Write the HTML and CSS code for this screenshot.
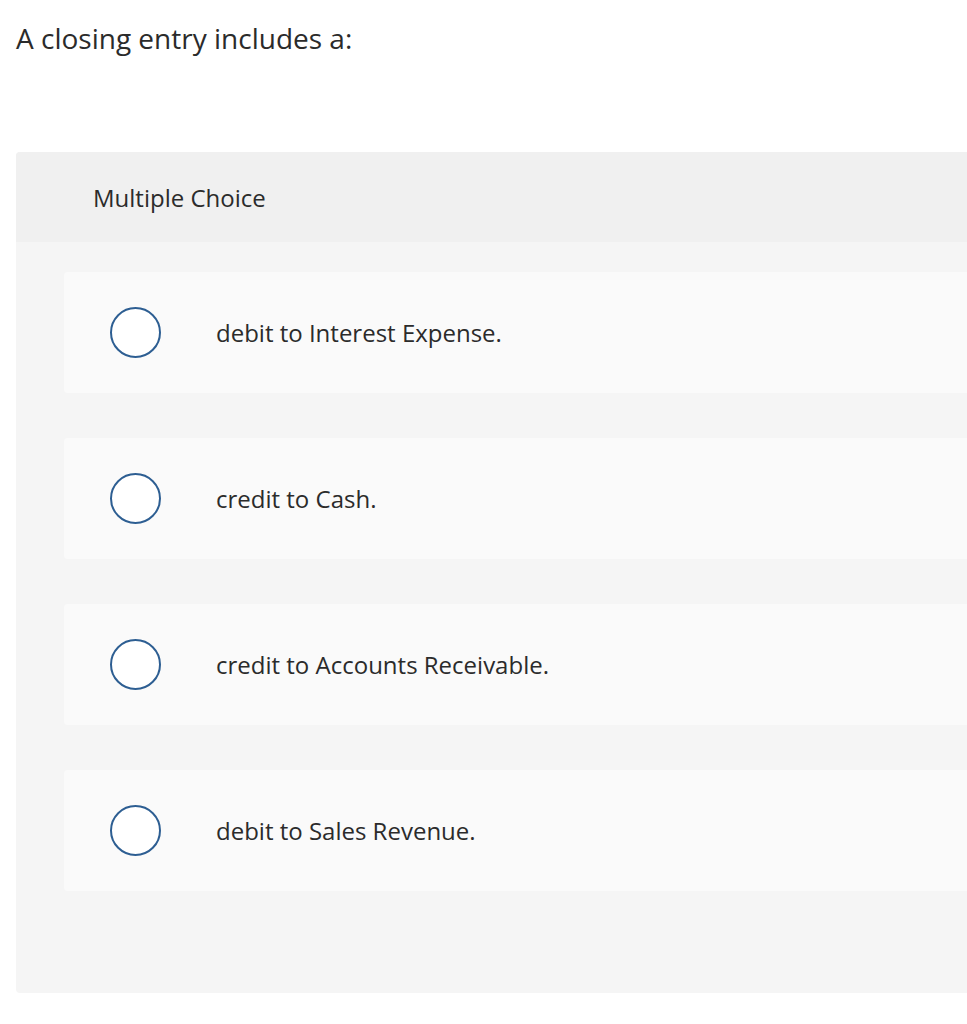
FILE: index.html
```html
<!DOCTYPE html>
<html>
<head>
<meta charset="utf-8">
<link rel="stylesheet" href="styles.css">
</head>
<body>
<div class="page">
  <h1 class="question">A closing entry includes a:</h1>
  <section class="panel">
    <header class="panel-head">Multiple Choice</header>
    <div class="options">
      <label class="option"><span class="radio"></span><span class="opt-text">debit to Interest Expense.</span></label>
      <label class="option"><span class="radio"></span><span class="opt-text">credit to Cash.</span></label>
      <label class="option"><span class="radio"></span><span class="opt-text">credit to Accounts Receivable.</span></label>
      <label class="option"><span class="radio"></span><span class="opt-text">debit to Sales Revenue.</span></label>
    </div>
  </section>
</div>
</body>
</html>
```
FILE: styles.css
```css
html, body {
  margin: 0;
  padding: 0;
  background: #ffffff;
}
body {
  font-family: "Open Sans", "Liberation Sans", sans-serif;
  color: #333333;
}
.page {
  padding: 18px 0 0 16px;
}
.question {
  margin: 0;
  font-size: 28px;
  font-weight: 400;
  line-height: 40px;
  color: #2b2b2b;
  height: 134px;
}
.panel {
  background: #f5f5f5;
  border-radius: 4px 0 0 4px;
  height: 841px;
}
.panel-head {
  background: #f0f0f0;
  border-radius: 4px 0 0 0;
  height: 90px;
  padding-left: 77px;
  display: flex;
  align-items: center;
  font-size: 24px;
  color: #2b2b2b;
}
.options {
  padding: 30px 0 0 48px;
  display: flex;
  flex-direction: column;
  gap: 45px;
}
.option {
  background: #fafafa;
  border-radius: 4px 0 0 4px;
  height: 121px;
  display: flex;
  align-items: center;
  padding-left: 46px;
}
.radio {
  width: 47px;
  height: 47px;
  border: 2px solid #2d5e92;
  border-radius: 50%;
  background: #ffffff;
  flex: none;
}
.opt-text {
  margin-left: 55px;
  font-size: 24px;
  color: #2b2b2b;
}
```
